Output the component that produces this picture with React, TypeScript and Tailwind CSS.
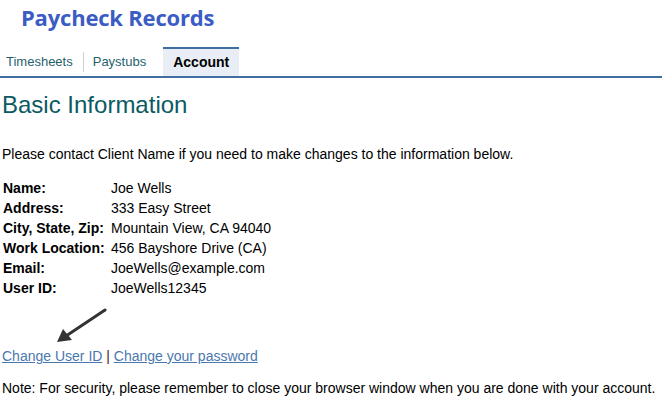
const info: [string, string][] = [
  ["Name:", "Joe Wells"],
  ["Address:", "333 Easy Street"],
  ["City, State, Zip:", "Mountain View, CA 94040"],
  ["Work Location:", "456 Bayshore Drive (CA)"],
  ["Email:", "JoeWells@example.com"],
  ["User ID:", "JoeWells12345"],
];

export default function App() {
  return (
    <div className="relative w-[662px] h-[401px] bg-white text-[14px] text-black overflow-hidden [font-family:'Liberation_Sans',Arial,sans-serif]">
      <h1 className="pl-[21px] pt-[2px] h-[47px] text-[22px] font-bold text-[#3b5cc4] [font-family:'Open_Sans',sans-serif] leading-[30px] tracking-[-0.2px]">
        Paycheck Records
      </h1>

      <div className="flex items-end h-[31px] border-b-2 border-[#3f6fa0] text-[13px]">
        <a className="flex items-center h-[29px] pl-[6px] pr-[10px] text-[#1f5f6e]">Timesheets</a>
        <span className="w-px h-[20px] mb-[4px] bg-[#d0d0d0]" />
        <a className="flex items-center h-[29px] pl-[9px] pr-[17px] text-[#1f5f6e]">Paystubs</a>
        <a className="flex items-center justify-center h-[29px] w-[76px] bg-[#e9edf6] border-t-2 border-[#3f6fa0] text-[14px] font-bold">
          Account
        </a>
      </div>

      <h2 className="pl-[2px] pt-[13px] text-[24px] leading-[28px] text-[#0c5a63]">Basic Information</h2>

      <p className="pl-[2px] mt-[27px] leading-[16px]">
        Please contact Client Name if you need to make changes to the information below.
      </p>

      <div className="mt-[16px] pl-[3px] grid grid-cols-[108px_1fr] leading-[20px]">
        {info.map(([label, value]) => (
          <div key={label} className="contents">
            <span className="font-bold">{label}</span>
            <span>{value}</span>
          </div>
        ))}
      </div>

      <svg className="absolute left-[54px] top-[307px]" width="56" height="38" viewBox="0 0 56 38">
        <line x1="51" y1="3" x2="12" y2="29" stroke="#333" strokeWidth="3" strokeLinecap="round" />
        <polygon points="3,35 9,22 18,33" fill="#333" />
      </svg>

      <div className="absolute left-[2px] top-[348px] leading-[16px]">
        <a className="text-[#4a78ae] underline">Change User ID</a>
        <span className="text-[#4b1a2a]"> | </span>
        <a className="text-[#4a78ae] underline">Change your password</a>
      </div>

      <p className="absolute left-[2px] top-[380px] leading-[16px]">
        Note: For security, please remember to close your browser window when you are done with your account.
      </p>
    </div>
  );
}
